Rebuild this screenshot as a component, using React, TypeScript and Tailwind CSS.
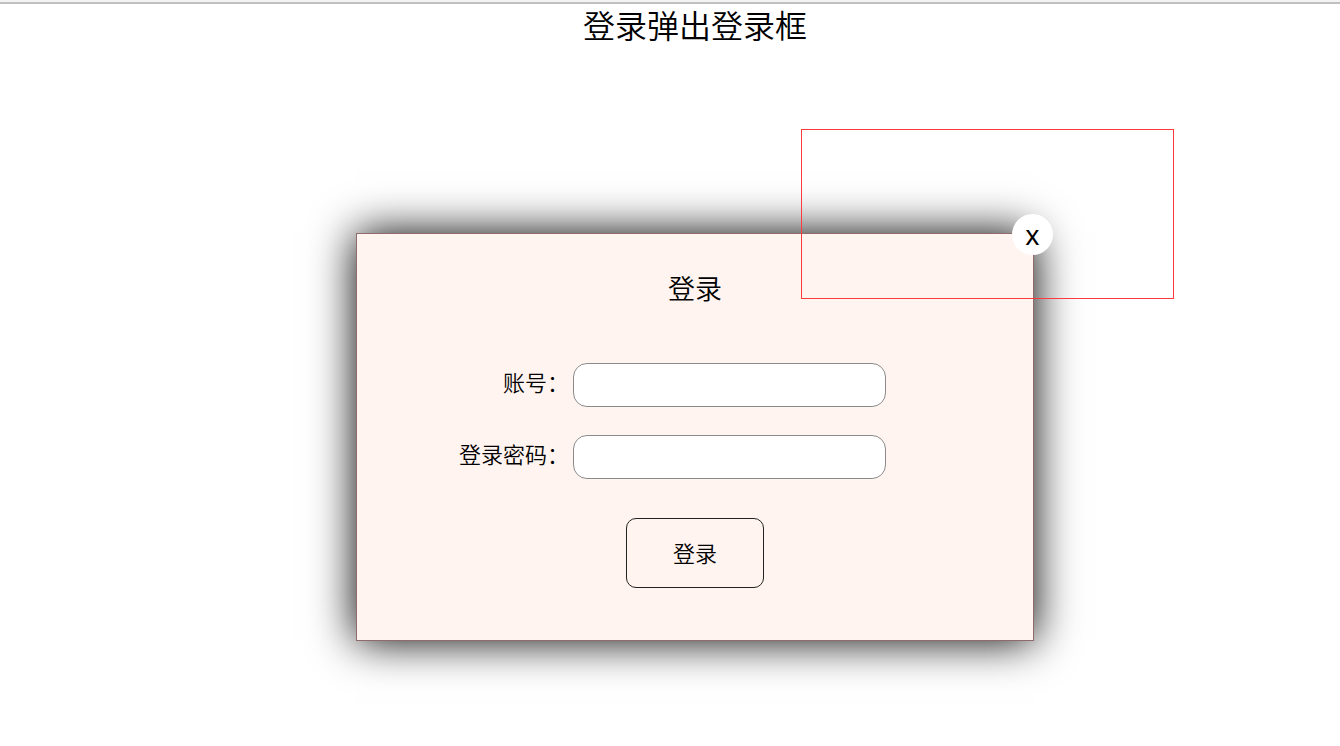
import React from 'react';

type FieldProps = {
  id: string;
  label: string;
  type: string;
};

const Field = ({ id, label, type }: FieldProps) => (
  <div className="flex items-center gap-1">
    <label htmlFor={id} className="w-[212px] pb-1.5 text-right text-[22px] leading-8">
      {label}
    </label>
    <input
      id={id}
      name={id}
      type={type}
      className="h-11 w-[313px] rounded-[14px] border border-[#8a8a8a] bg-white px-3 text-[22px] outline-none"
    />
  </div>
);

const App = () => {
  const [open, setOpen] = React.useState(true);

  return (
    <div className="relative min-h-screen w-full overflow-hidden border-t-2 border-[#f3f3f3] bg-white font-['Noto_Sans','Noto_Sans_CJK_SC',sans-serif] font-[350] text-black">
      <div className="h-0.5 bg-[#c0c0c0]" />

      <main className="flex flex-col items-center pl-[50px]">
        <h1>
          <button type="button" className="text-[32px] leading-[44px]" onClick={() => setOpen(true)}>
            登录弹出登录框
          </button>
        </h1>

        {open && (
          <form
            className="relative mt-[185px] flex w-[678px] flex-col items-center border border-[#8f6b6b] bg-[#fff4ef] pt-[37px] pb-[52px] shadow-[0_0_42px_#000]"
            onSubmit={(e) => e.preventDefault()}
          >
            <h2 className="text-[27px] leading-9">登录</h2>

            <div className="mt-14 flex w-full flex-col gap-7">
              <Field id="account" label="账号：" type="text" />
              <Field id="password" label="登录密码：" type="password" />
            </div>

            <button
              type="submit"
              className="mt-[39px] h-[70px] w-[138px] rounded-[10px] border border-[#222] text-[22px]"
            >
              登录
            </button>

            {/* Close */}
            <button
              type="button"
              aria-label="x"
              className="absolute -top-5 -right-5 flex size-[41px] items-center justify-center rounded-full bg-white text-[27px] leading-none font-normal"
              onClick={() => setOpen(false)}
            >
              x
            </button>
          </form>
        )}
      </main>

      {/* Highlight around the close button */}
      <div className="pointer-events-none absolute top-[127px] left-[801px] h-[170px] w-[373px] border border-[#fb3b3b]" />
    </div>
  );
};

export default App;
